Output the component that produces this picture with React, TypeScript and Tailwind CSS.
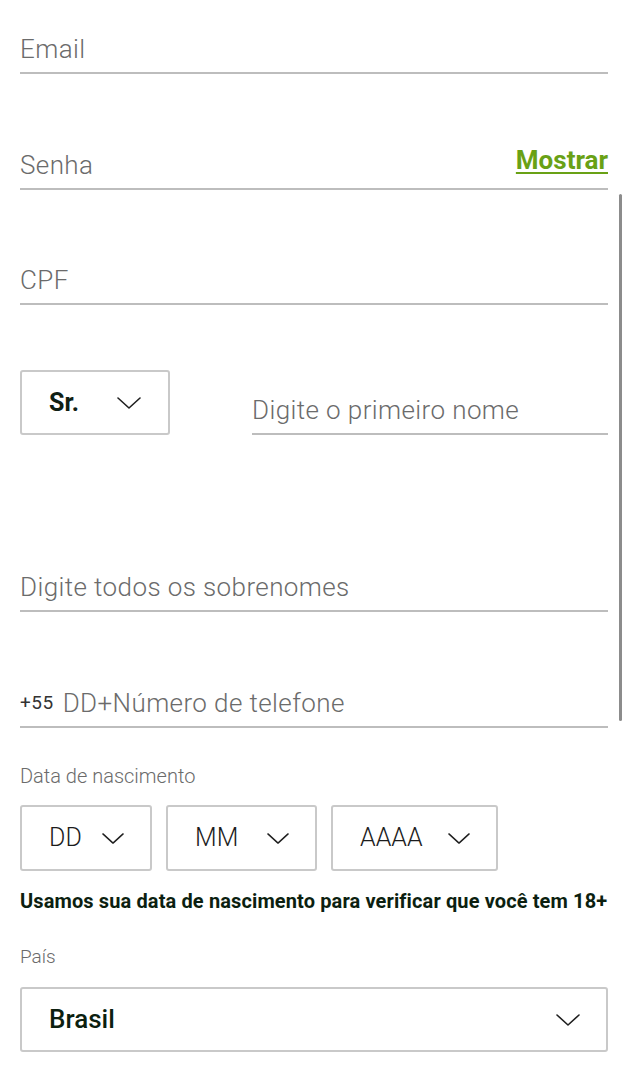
import React from "react";

const Chevron = ({w = 24}: {w?: number}) => (
    <svg width={w} height={w / 2} viewBox="0 0 24 12" fill="none">
        <polyline points="1,1 12,11 23,1" stroke="#1f1f1f" strokeWidth="1.6" strokeLinecap="round" strokeLinejoin="round" />
    </svg>
);

const Field = ({children, className}: {children: React.ReactNode; className: string}) => (
    <div className={`flex items-end border-b-2 border-[#bdbdbd] pb-[7px] ${className}`}>
        {children}
    </div>
);

const Placeholder = ({text}: {text: string}) => (
    <span className="text-[26px] leading-[32px] font-light tracking-[0.4px] text-[#6b6b6b]">{text}</span>
);

const Select = ({label, className}: {label: string; className: string}) => (
    <div className={`flex items-center justify-between h-[66px] border-2 border-[#c9c9c9] rounded-[3px] pl-[27px] pr-[26px] ${className}`}>
        <span className="text-[25px] font-light text-[#1c1c1c]">{label}</span>
        <Chevron w={22} />
    </div>
);

export default function App() {
    return (
        <div className="relative min-h-[1080px] bg-white px-[20px] pr-[21px] font-['Roboto','Liberation_Sans',sans-serif]">
            {/* scrollbar */}
            <div className="absolute right-[7px] top-[194px] w-[3px] h-[527px] bg-[#8c8c8c] rounded-full" />

            <Field className="h-[74px]">
                <Placeholder text="Email" />
            </Field>

            <Field className="h-[116px] justify-between">
                <Placeholder text="Senha" />
                <a href="#" className="mb-[5px] text-[26px] leading-[32px] font-bold text-[#69a115] underline decoration-2 underline-offset-[3px]">
                    Mostrar
                </a>
            </Field>

            <Field className="h-[115px]">
                <Placeholder text="CPF" />
            </Field>

            <div className="mt-[65px] flex items-end">
                <div className="flex items-center justify-between w-[150px] h-[65px] border-2 border-[#c9c9c9] rounded-[3px] pl-[27px] pr-[27px]">
                    <span className="text-[25px] font-bold text-[#102014]">Sr.</span>
                    <Chevron />
                </div>
                <Field className="ml-[82px] flex-1">
                    <Placeholder text="Digite o primeiro nome" />
                </Field>
            </div>

            <Field className="h-[177px]">
                <Placeholder text="Digite todos os sobrenomes" />
            </Field>

            <Field className="h-[116px]">
                <span className="text-[19px] leading-[32px] text-[#333] mr-[9px] tracking-[0.5px]">+55</span>
                <Placeholder text="DD+Número de telefone" />
            </Field>

            <div className="mt-[36px] text-[20px] leading-[24px] font-light text-[#6b6b6b]">Data de nascimento</div>

            <div className="mt-[17px] flex gap-[14px]">
                <Select label="DD" className="w-[132px]" />
                <Select label="MM" className="w-[151px]" />
                <Select label="AAAA" className="w-[167px]" />
            </div>

            <p className="mt-[18px] text-[20px] leading-[24px] font-bold tracking-[0.12px] text-[#0c1f10]">
                Usamos sua data de nascimento para verificar que você tem 18+
            </p>

            <div className="mt-[32px] text-[19px] leading-[24px] font-light text-[#6b6b6b]">País</div>

            <div className="mt-[18px] flex items-center justify-between h-[65px] border-2 border-[#c9c9c9] rounded-[3px] pl-[27px] pr-[26px]">
                <span className="text-[26px] font-medium text-[#0c1f10]">Brasil</span>
                <Chevron />
            </div>
        </div>
    );
}
